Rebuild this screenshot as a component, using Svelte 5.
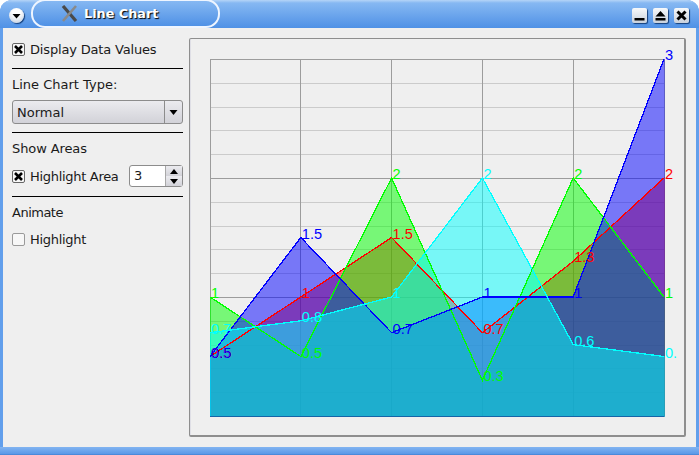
<script lang="ts">
  const colWidth = 90.8
  const left = 210
  const top = 59
  const bottom = 416
  const unit = (bottom - top) / 3

  const xAt = (i: number) => left + i * colWidth
  const yAt = (v: number) => bottom - v * unit

  // paint order gives the overlap colours, cyan is on top
  const series = [
    { color: '#ff0000', values: [0.5, 1, 1.5, 0.7, 1.3, 2], labels: ['0.5', '1', '1.5', '0.7', '1.3', '2'] },
    { color: '#00ff00', values: [1, 0.5, 2, 0.3, 2, 1], labels: ['1', '0.5', '2', '0.3', '2', '1'] },
    { color: '#0000ff', values: [0.5, 1.5, 0.7, 1, 1, 3], labels: ['0.5', '1.5', '0.7', '1', '1', '3'] },
    { color: '#00ffff', values: [0.7, 0.8, 1, 2, 0.6, 0.5], labels: ['0.7', '0.8', '1', '2', '0.6', '0.'] },
  ]

  const linePoints = (values: number[]) => values.map((v, i) => `${xAt(i)},${yAt(v)}`).join(' ')
  const areaPoints = (values: number[]) =>
    `${left},${bottom} ${linePoints(values)} ${xAt(5)},${bottom}`

  const minorLines = Array.from({ length: 14 }, (_, i) => i + 1).filter((i) => i % 5 !== 0)
  const snap = (v: number) => Math.round(v) + 0.5
</script>

<div class="window">
  <header class="titlebar">
    <button class="menu-btn" aria-label="Window menu">
      <svg width="15" height="15" viewBox="0 0 15 15"><path d="M3.5 6h8L7.5 10.5z" fill="#000" /></svg>
    </button>
    <div class="title-pill">
      <svg class="app-icon" width="17" height="17" viewBox="0 0 17 17">
        <path d="M2 1l13 15" stroke="#4a4a4a" stroke-width="3.2" fill="none" />
        <path d="M15 1L2 16" stroke="#8a8a8a" stroke-width="2.6" fill="none" />
      </svg>
      <span class="title-text">Line Chart</span>
    </div>
    <div class="win-buttons">
      <button class="win-btn" aria-label="Minimize">
        <svg width="13" height="13" viewBox="0 0 13 13"><rect x="1.5" y="9" width="10" height="2.5" fill="#000" /></svg>
      </button>
      <button class="win-btn" aria-label="Shade">
        <svg width="13" height="13" viewBox="0 0 13 13"><path d="M6.5 2L11.5 7.5H1.5z M1.5 9h10v2.5H1.5z" fill="#000" /></svg>
      </button>
      <button class="win-btn" aria-label="Close">
        <svg width="13" height="13" viewBox="0 0 13 13"><path d="M2.5 2.5l8 8M10.5 2.5l-8 8" stroke="#000" stroke-width="3" fill="none" /></svg>
      </button>
    </div>
  </header>

  <main class="content">
    <aside class="sidebar">
      <label class="check-row first">
        <span class="check checked"><svg width="11" height="11" viewBox="0 0 11 11"><path d="M2 2l7 7M9 2L2 9" stroke="#000" stroke-width="2.6" /></svg></span>
        <span class="squeeze-a">Display Data Values</span>
      </label>
      <hr class="rule-a" />
      <div class="caption">Line Chart Type:</div>
      <div class="combo">
        <span class="combo-value">Normal</span>
        <span class="combo-arrow"><svg width="9" height="5" viewBox="0 0 9 5"><path d="M0.5 0h8L4.5 5z" fill="#000" /></svg></span>
      </div>
      <hr class="rule-b" />
      <div class="caption low squeeze-c">Show Areas</div>
      <div class="area-row">
        <label class="check-row">
          <span class="check checked"><svg width="11" height="11" viewBox="0 0 11 11"><path d="M2 2l7 7M9 2L2 9" stroke="#000" stroke-width="2.6" /></svg></span>
          <span class="squeeze-b">Highlight Area</span>
        </label>
        <div class="spin">
          <span class="spin-value">3</span>
          <span class="spin-arrows">
            <span class="spin-arrow"><svg width="8" height="5" viewBox="0 0 8 5"><path d="M4 0L8 5H0z" fill="#000" /></svg></span>
            <span class="spin-arrow"><svg width="8" height="5" viewBox="0 0 8 5"><path d="M0 0h8L4 5z" fill="#000" /></svg></span>
          </span>
        </div>
      </div>
      <hr class="rule-c" />
      <div class="caption low squeeze-d">Animate</div>
      <label class="check-row last">
        <span class="check"></span>
        <span class="squeeze-b">Highlight</span>
      </label>
    </aside>

    <section class="chart-frame">
      <svg class="chart" width="699" height="455" viewBox="0 0 699 455">
        {#each minorLines as i}
          <line x1={left} x2={xAt(5)} y1={snap(top + (i * unit) / 5)} y2={snap(top + (i * unit) / 5)} stroke="#cbcbcb" />
        {/each}
        {#each [0, 1, 2, 3] as i}
          <line x1={left} x2={xAt(5)} y1={snap(top + i * unit)} y2={snap(top + i * unit)} stroke="#9c9c9c" />
        {/each}
        {#each [0, 1, 2, 3, 4, 5] as i}
          <line x1={Math.floor(xAt(i)) + 0.5} x2={Math.floor(xAt(i)) + 0.5} y1={top} y2={bottom} stroke="#9c9c9c" />
        {/each}
        {#each series as s}
          <polygon points={areaPoints(s.values)} fill={s.color} fill-opacity="0.5" stroke={s.color} stroke-opacity="0.4" shape-rendering="crispEdges" />
        {/each}
        <line x1={left} x2={xAt(5)} y1={bottom + 0.5} y2={bottom + 0.5} stroke="#1565a8" />
        {#each series as s}
          <polyline points={linePoints(s.values)} fill="none" stroke={s.color} stroke-width="1.3" shape-rendering="crispEdges" />
        {/each}
        {#each series as s}
          {#each s.labels as label, i}
            <text class="data-label" x={xAt(i) + 1} y={yAt(s.values[i]) + 1} fill={s.color}>{label}</text>
          {/each}
        {/each}
      </svg>
    </section>
  </main>
  <div class="bottom-edge"></div>
</div>

<style>
  :global(body) {
    background: #fff;
    overflow: hidden;
  }

  .window {
    width: 699px;
    height: 455px;
    display: flex;
    flex-direction: column;
    box-sizing: border-box;
    padding: 0 3px;
    background: #629fec;
    border-radius: 12px 12px 0 0;
    font-family: "DejaVu Sans", sans-serif;
    font-size: 13px;
    color: #1a1a1a;
    overflow: hidden;
  }

  .titlebar {
    position: relative;
    flex: none;
    height: 28px;
    margin: 0 -3px;
    padding: 0 10px 0 9px;
    display: flex;
    align-items: center;
    background: linear-gradient(#b5d4f7 0, #86b8f2 3px, #4f91e6 100%);
    box-sizing: border-box;
  }

  .menu-btn {
    width: 15px;
    height: 15px;
    margin-top: 3px;
    padding: 0;
    display: flex;
    align-items: center;
    justify-content: center;
    border: none;
    border-radius: 50%;
    background: radial-gradient(circle at 50% 30%, #fff 30%, #b9c6d8);
    box-shadow: 1px 1px 1px #143f7a;
  }

  .title-pill {
    position: absolute;
    left: 31px;
    top: -1px;
    width: 189px;
    height: 29px;
    box-sizing: border-box;
    padding-left: 28px;
    display: flex;
    align-items: center;
    gap: 6px;
    border: 2px solid #eef5ff;
    border-radius: 14px;
    background: linear-gradient(#86b8f2, #4f91e6);
  }

  .title-text {
    color: #fff;
    font-weight: 700;
    font-size: 12.8px;
    text-shadow: 1px 1px 1px #000;
  }

  .win-buttons {
    margin-left: auto;
    display: flex;
    gap: 6px;
    margin-top: 3px;
  }

  .win-btn {
    width: 15px;
    height: 15px;
    padding: 0;
    display: flex;
    align-items: center;
    justify-content: center;
    border: none;
    border-radius: 2px;
    background: linear-gradient(#f7f9fb, #c9d1dc);
    box-shadow: 1px 1px 1px #143f7a;
  }

  .content {
    flex: none;
    height: 419px;
    display: flex;
    background: #efefef;
    box-sizing: border-box;
    padding: 10px 10px 10px 9px;
    gap: 6px;
  }

  .sidebar {
    width: 171px;
    flex: none;
    display: flex;
    flex-direction: column;
  }

  .check-row {
    display: flex;
    align-items: center;
    gap: 5px;
    height: 20px;
  }

  .check-row.first {
    margin-top: 1px;
  }

  .check-row.last {
    margin-top: 9px;
  }

  .squeeze-a {
    letter-spacing: -0.17px;
  }

  .squeeze-b {
    letter-spacing: -0.3px;
  }

  .squeeze-c {
    letter-spacing: -0.1px;
  }

  .squeeze-d {
    letter-spacing: -0.5px;
  }

  .check {
    width: 11px;
    height: 11px;
    display: flex;
    align-items: center;
    justify-content: center;
    border: 1px solid #9a9a9a;
    border-radius: 2px;
    background: #f7f7f7;
  }

  .check.checked {
    border-color: #666;
  }

  hr {
    width: 100%;
    height: 1px;
    border: none;
    background: #000;
  }

  .rule-a {
    margin: 9px 0 8px;
  }

  .rule-b {
    margin: 8px 0 7px;
  }

  .rule-c {
    margin: 9px 0 7px;
  }

  .caption {
    height: 16px;
    line-height: 16px;
  }

  .caption.low {
    line-height: 18px;
  }

  .combo {
    margin-top: 7px;
    height: 24px;
    display: flex;
    box-sizing: border-box;
    border: 1px solid #8c8c8c;
    border-radius: 3px;
    background: linear-gradient(#ebebef, #d2d2d8);
  }

  .combo-value {
    flex: 1;
    padding-left: 4px;
    line-height: 24px;
  }

  .combo-arrow {
    width: 17px;
    display: flex;
    align-items: center;
    justify-content: center;
    border-left: 1px solid #8c8c8c;
  }

  .area-row {
    display: flex;
    align-items: center;
    justify-content: space-between;
    height: 22px;
    margin-top: 9px;
  }

  .spin {
    width: 54px;
    height: 22px;
    display: flex;
    box-sizing: border-box;
    border: 1px solid #8c8c8c;
    border-radius: 3px;
    background: #fff;
  }

  .spin-value {
    flex: 1;
    padding-left: 4px;
    line-height: 20px;
  }

  .spin-arrows {
    width: 16px;
    display: flex;
    flex-direction: column;
    border-left: 1px solid #a8a8a8;
  }

  .spin-arrow {
    flex: 1;
    display: flex;
    align-items: center;
    justify-content: center;
    background: linear-gradient(#ececf0, #d2d2d8);
  }

  .chart-frame {
    position: relative;
    flex: 1;
    box-sizing: border-box;
    border: 2px solid #8e8e8e;
    border-left-width: 1px;
    border-top-width: 1px;
    border-radius: 2px;
    box-shadow: inset 1px 0 0 #dfdfe6;
    overflow: hidden;
  }

  /* the svg uses window coordinates, the frame is just its viewport */
  .chart {
    position: absolute;
    left: -190px;
    top: -39px;
  }

  .data-label {
    font-family: "Liberation Sans", sans-serif;
    font-size: 14.6px;
  }

  .bottom-edge {
    flex: 1;
    margin: 0 -3px;
    background: linear-gradient(#82b4f1, #5b99e8 85%, #3f7fd0);
  }
</style>
